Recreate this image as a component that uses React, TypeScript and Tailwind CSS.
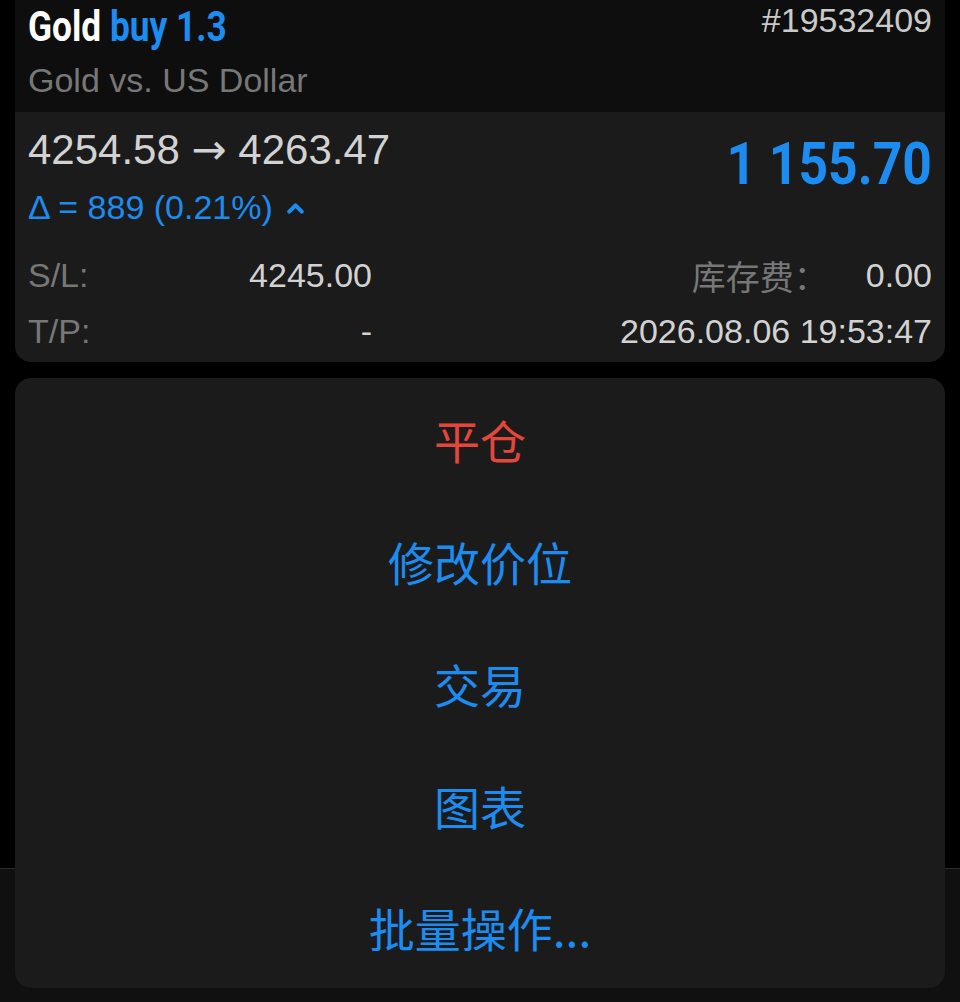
import { ChevronUp } from 'lucide-react';

const sans = { fontFamily: '"Liberation Sans", Arial, "Noto Sans CJK SC", sans-serif' };

const menuItems = [
	{ label: '平仓', tone: 'text-[#e4463b]' },
	{ label: '修改价位', tone: 'text-[#1d8cf0]' },
	{ label: '交易', tone: 'text-[#1d8cf0]' },
	{ label: '图表', tone: 'text-[#1d8cf0]' },
	{ label: '批量操作...', tone: 'text-[#1d8cf0]' },
];

function PositionCard() {
	return (
		<div className="flex flex-col">
			{/* header */}
			<div className="bg-[#0e0e0e] px-[13px] pb-[12px]">
				<div className="flex items-start justify-between">
					<div
						className="h-[54px] leading-[54px] text-[42px] font-bold whitespace-nowrap"
						style={{ fontFamily: 'Roboto, "Liberation Sans", sans-serif' }}
					>
						<span className="inline-block origin-left scale-x-[0.84]">
							<span className="text-white">Gold</span>{' '}
							<span className="text-[#1d8cf0]">buy 1.3</span>
						</span>
					</div>
					<div className="leading-[41px] text-[34px] text-[#cacaca]" style={sans}>
						#19532409
					</div>
				</div>
				<div className="mt-[6px] leading-[40px] text-[34px] text-[#777777]" style={sans}>
					Gold vs. US Dollar
				</div>
			</div>

			{/* body */}
			<div className="rounded-b-[16px] bg-[#1b1b1b] px-[13px] pt-[14px] pb-[6px]" style={sans}>
				<div className="flex items-start justify-between">
					<div className="flex flex-col">
						<div className="leading-[48px] text-[42px] text-[#d2d2d2] whitespace-nowrap">
							4254.58 <span style={{ fontFamily: '"DejaVu Sans", sans-serif' }}>→</span> 4263.47
						</div>
						<div className="mt-[13px] flex items-center leading-[40px] text-[34px] text-[#1d8cf0] whitespace-nowrap">
							<span>Δ = 889 (0.21%)</span>
							<ChevronUp className="ml-[10px] mt-[2px]" size={25} strokeWidth={4} />
						</div>
					</div>
					<div
						className="leading-[75px] text-[60px] font-bold text-[#1d8cf0] whitespace-nowrap"
						style={{ fontFamily: 'Roboto, "Liberation Sans", sans-serif' }}
					>
						<span className="inline-block origin-right scale-x-[0.86]">1 155.70</span>
					</div>
				</div>

				<div className="mt-[23px] flex h-[50px] items-center text-[34px]">
					<div className="flex w-[344px] justify-between">
						<span className="text-[#777777]">S/L:</span>
						<span className="text-[#d2d2d2]">4245.00</span>
					</div>
					<div className="flex flex-1 justify-end gap-[38px]">
						<span className="text-[#777777]" style={{ fontFamily: '"Noto Sans CJK SC", sans-serif' }}>
							库存费：
						</span>
						<span className="text-[#d2d2d2]">0.00</span>
					</div>
				</div>
				<div className="mt-[6px] flex h-[50px] items-center text-[34px]">
					<div className="flex w-[344px] justify-between">
						<span className="text-[#777777]">T/P:</span>
						<span className="text-[#d2d2d2]">-</span>
					</div>
					<div className="flex flex-1 justify-end">
						<span className="text-[#d2d2d2]">2026.08.06 19:53:47</span>
					</div>
				</div>
			</div>
		</div>
	);
}

function ActionSheet() {
	return (
		<div className="mt-[16px] flex flex-col rounded-[16px] bg-[#1b1b1b]">
			{menuItems.map((item) => (
				<button
					key={item.label}
					className={`flex h-[122px] items-center justify-center text-[46px] ${item.tone}`}
					style={{ fontFamily: '"Noto Sans CJK SC", "Liberation Sans", sans-serif' }}
				>
					{item.label}
				</button>
			))}
		</div>
	);
}

export default function App() {
	return (
		<div className="relative h-[1002px] w-[960px] overflow-hidden bg-black">
			{/* tab bar peeking behind the sheet */}
			<div className="absolute inset-x-0 top-[868px] bottom-0 border-t border-[#2c2c2c] bg-[#101010]" />
			<div className="relative z-10 px-[15px]">
				<PositionCard />
				<ActionSheet />
			</div>
		</div>
	);
}
